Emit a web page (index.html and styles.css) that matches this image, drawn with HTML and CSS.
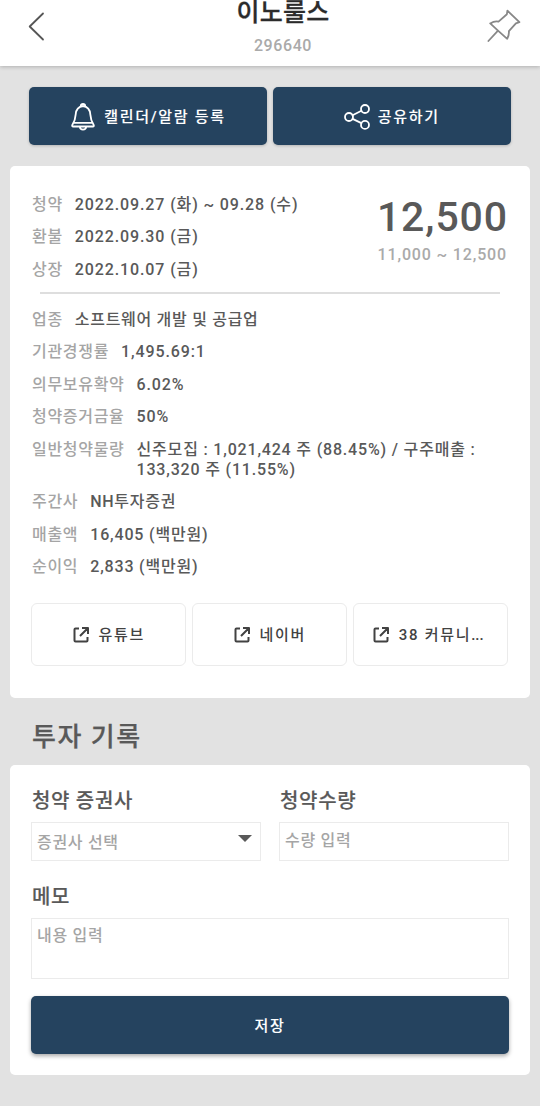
FILE: index.html
```html
<!DOCTYPE html>
<html lang="ko">
<head>
<meta charset="utf-8">
<title>이노룰스</title>
<link rel="stylesheet" href="styles.css">
</head>
<body>
<header class="header">
  <svg class="back" viewBox="0 0 20 32" width="20" height="32"><path d="M16 3.500 2.700 16.500 16 29.500"/></svg>
  <div class="heading">
    <h1 class="title">이노룰스</h1>
    <div class="code">296640</div>
  </div>
  <svg class="pin" viewBox="0 0 36 36" width="36" height="36"><path d="M21.400 2.600 33.400 14.200 29.900 15.400 22.900 23.200Q23.200 27.500 21.200 30.800L12 22.600 4.200 15.400Q8.500 12.800 12.500 13.600L20.900 6.200zM12 22.600 2.400 33"/></svg>
</header>
<main class="content">
  <div class="actions">
    <button class="primary"><svg class="bell" viewBox="0 0 26 30" width="26" height="30"><path d="M13 4c-4.600.7-7 4-7.300 8.400-.3 5-.8 6.600-3.400 10.600-.4.900-.1 1.500.8 1.500h19.800c.9 0 1.200-.6.8-1.500-2.600-4-3.100-5.600-3.400-10.600C20 8 17.600 4.700 13 4zM4 20.800h18M9.800 25c.4 3.400 6 3.400 6.400 0"/><path d="M10.800 4c.2-2.700 4.200-2.700 4.400 0"/></svg><span>캘린더/알람 등록</span></button>
    <button class="primary"><svg class="share" viewBox="0 0 26 26" width="26" height="26"><path d="m8.600 11.300 8.800-4.500M8.600 14.900l8.800 4.200"/><circle cx="5" cy="13" r="4"/><circle cx="21" cy="5" r="4"/><circle cx="21" cy="20.900" r="4"/></svg><span>공유하기</span></button>
  </div>
  <section class="card info">
    <div class="summary">
      <dl class="rows">
        <div class="row num"><dt>청약</dt><dd>2022.09.27 (화) ~ 09.28 (수)</dd></div>
        <div class="row num"><dt>환불</dt><dd>2022.09.30 (금)</dd></div>
        <div class="row num"><dt>상장</dt><dd>2022.10.07 (금)</dd></div>
      </dl>
      <div class="price">
        <div class="final">12,500</div>
        <div class="band">11,000 ~ 12,500</div>
      </div>
    </div>
    <hr class="divider">
    <dl class="rows">
      <div class="row"><dt>업종</dt><dd>소프트웨어 개발 및 공급업</dd></div>
      <div class="row num"><dt>기관경쟁률</dt><dd>1,495.69:1</dd></div>
      <div class="row num"><dt>의무보유확약</dt><dd>6.02%</dd></div>
      <div class="row num"><dt>청약증거금율</dt><dd>50%</dd></div>
      <div class="row mixed"><dt>일반청약물량</dt><dd>신주모집 : 1,021,424 주 (88.45%) / 구주매출 :<br>133,320 주 (11.55%)</dd></div>
      <div class="row"><dt>주간사</dt><dd>NH투자증권</dd></div>
      <div class="row mixed"><dt>매출액</dt><dd>16,405 (백만원)</dd></div>
      <div class="row mixed"><dt>순이익</dt><dd>2,833 (백만원)</dd></div>
    </dl>
    <div class="links">
      <button class="link"><svg class="open" viewBox="0 0 18 18" width="18" height="18"><path d="M7 2.500H3.500Q2.500 2.500 2.500 3.500v11q0 1 1 1h11q1 0 1-1V11M10 2h6v6M15.500 2.500 8 10"/></svg><span>유튜브</span></button>
      <button class="link"><svg class="open" viewBox="0 0 18 18" width="18" height="18"><path d="M7 2.500H3.500Q2.500 2.500 2.500 3.500v11q0 1 1 1h11q1 0 1-1V11M10 2h6v6M15.500 2.500 8 10"/></svg><span>네이버</span></button>
      <button class="link clipped"><svg class="open" viewBox="0 0 18 18" width="18" height="18"><path d="M7 2.500H3.500Q2.500 2.500 2.500 3.500v11q0 1 1 1h11q1 0 1-1V11M10 2h6v6M15.500 2.500 8 10"/></svg><span>38 커뮤니<span class="dots">...</span></span></button>
    </div>
  </section>
  <h2 class="section-title">투자 기록</h2>
  <section class="card record">
    <div class="fields">
      <div class="field">
        <h3 class="label">청약 증권사</h3>
        <div class="box select"><span>증권사 선택</span><svg viewBox="0 0 14 7" width="14" height="7"><path d="M0 0h14L7 7z"/></svg></div>
      </div>
      <div class="field">
        <h3 class="label">청약수량</h3>
        <div class="box">수량 입력</div>
      </div>
    </div>
    <h3 class="label memo-label">메모</h3>
    <div class="box memo">내용 입력</div>
    <button class="primary save"><span>저장</span></button>
  </section>
</main>
</body>
</html>
```
FILE: styles.css
```css
* { box-sizing: border-box; margin: 0; padding: 0; }
body {
  width: 540px;
  height: 1106px;
  overflow: hidden;
  background: #e2e2e2;
  color: #595959;
  font: 500 16px/20px Roboto, "Noto Sans CJK KR", sans-serif;
  letter-spacing: .7px;
}
svg { flex: none; fill: none; stroke-linecap: round; stroke-linejoin: round; }
button { font: inherit; letter-spacing: inherit; }
.header {
  display: flex;
  justify-content: space-between;
  height: 66px;
  padding: 0 18px 0 27px;
  background: #fff;
  box-shadow: 0 1px 4px rgba(0, 0, 0, .22);
}
.back { margin-top: 10px; stroke: #555; stroke-width: 1.8; }
.heading { text-align: center; padding-left: 33px; }
.title { height: 35px; font-size: 25px; font-weight: 500; line-height: 25px; letter-spacing: .2px; color: #2b2b2b; -webkit-text-stroke: .3px; }
.code { height: 20px; line-height: 21px; color: #aaa; letter-spacing: .6px; }
.pin { margin-top: 8px; stroke: #888; stroke-width: 1.8; }
.content { padding: 21px 10px 0; }
.actions { display: grid; grid-template-columns: 238px 238.5px; gap: 5.5px; padding-left: 19px; }
.primary {
  display: flex;
  align-items: center;
  justify-content: center;
  height: 58px;
  padding-top: 1px;
  border: 0;
  border-radius: 5px;
  background: #25435f;
  color: #fff;
  font-size: 15px;
  letter-spacing: 1.7px;
  box-shadow: 0 1px 3px rgba(0, 0, 0, .2);
}
.primary svg { stroke: #fff; stroke-width: 1.8; }
.primary span { -webkit-text-stroke: .1px; }
.bell { margin-right: 8px; }
.share { margin-right: 8px; }
.card { width: 520px; border-radius: 5px; background: #fff; }
.info { height: 531.5px; margin-top: 21px; padding: 28.5px 22px 0; }
.summary { display: flex; justify-content: space-between; }
.rows { display: flex; flex-direction: column; gap: 12.5px; }
.row { display: flex; gap: 12px; white-space: nowrap; }
.num dd { letter-spacing: .88px; }
.mixed dd { letter-spacing: .82px; }
dt { color: #a5a5a5; }
.price { text-align: right; }
.final { height: 50px; font-size: 41px; line-height: 44px; letter-spacing: .9px; }
.band { margin-right: 1px; color: #aaa; letter-spacing: .85px; }
.divider { height: 1.5px; margin: 12.5px 8px 16px; border: 0; background: #dedede; }
.links { display: grid; grid-template-columns: repeat(3, 155px); gap: 6px; margin: 26px 0 0 -1px; }
.link {
  display: flex;
  align-items: center;
  justify-content: center;
  gap: 8.5px;
  height: 63px;
  padding-top: 1px;
  border: 1.500px solid #ebebeb;
  border-radius: 6px;
  background: #fff;
  color: #424242;
  font-size: 15px;
  letter-spacing: 1.7px;
  white-space: nowrap;
}
.clipped { padding-right: 5px; }
.dots { letter-spacing: 0; }
.open { stroke: #424242; stroke-width: 2; stroke-linecap: butt; }
.section-title { height: 67.5px; padding: 24px 22px 0; font-size: 26px; font-weight: 500; line-height: 30px; letter-spacing: 1.5px; -webkit-text-stroke: .25px; }
.record { height: 310px; padding: 24px 21px 0; }
.fields { display: grid; grid-template-columns: 230px 230px; gap: 18px; }
.label { height: 33px; padding-left: 1px; font-size: 20px; font-weight: 500; line-height: 25px; letter-spacing: .7px; -webkit-text-stroke: .15px; }
.box { height: 39px; padding: 8px 5px; border: 1.500px solid #ebebeb; color: #a5a5a5; }
.select { display: flex; justify-content: space-between; padding: 10px 8px 0 5px; }
.select svg { margin-top: 2px; fill: #595959; }
.memo-label { margin-top: 24px; }
.memo { height: 61px; padding-top: 7px; }
.save { width: 478px; margin-top: 17px; box-shadow: 0 2px 4px rgba(0, 0, 0, .35); }
```
